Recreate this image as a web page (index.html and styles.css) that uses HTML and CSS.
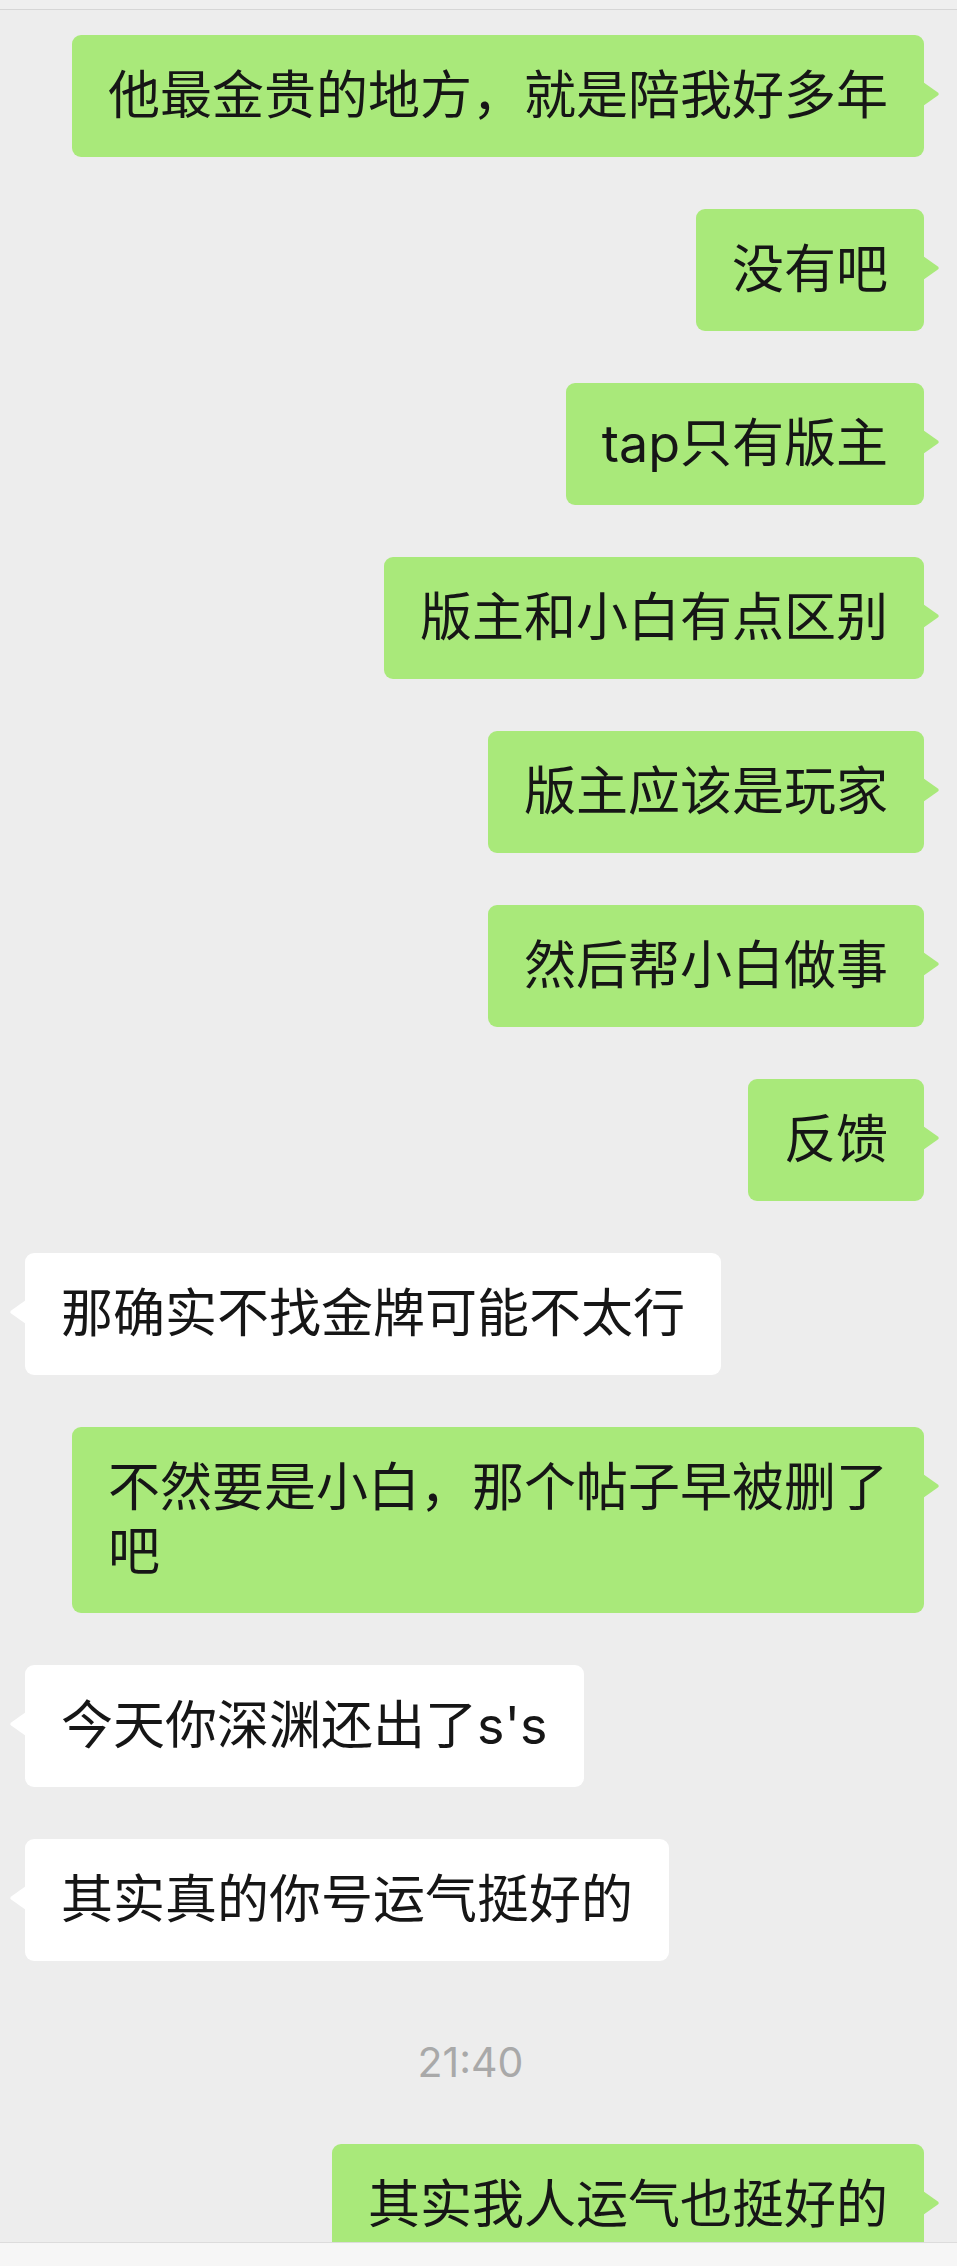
FILE: index.html
```html
<!DOCTYPE html>
<html lang="zh-CN">
<head>
  <meta charset="UTF-8">
  <meta name="viewport" content="width=device-width, initial-scale=1.0">
  <title>聊天记录</title>
  <link rel="stylesheet" href="styles.css">
</head>
<body>
  <div class="screen">
    <!-- 顶部导航栏的底边 -->
    <div class="topbar"></div>

    <!-- 消息列表 -->
    <div class="chat">
      <div class="msg mine"><div class="bubble">他最金贵的地方，就是陪我好多年</div></div>
      <div class="msg mine"><div class="bubble">没有吧</div></div>
      <div class="msg mine"><div class="bubble">tap只有版主</div></div>
      <div class="msg mine"><div class="bubble">版主和小白有点区别</div></div>
      <div class="msg mine"><div class="bubble">版主应该是玩家</div></div>
      <div class="msg mine"><div class="bubble">然后帮小白做事</div></div>
      <div class="msg mine"><div class="bubble">反馈</div></div>
      <div class="msg theirs"><div class="bubble">那确实不找金牌可能不太行</div></div>
      <div class="msg mine"><div class="bubble">不然要是小白，那个帖子早被删了吧</div></div>
      <div class="msg theirs"><div class="bubble">今天你深渊还出了s's</div></div>
      <div class="msg theirs"><div class="bubble">其实真的你号运气挺好的</div></div>

      <div class="time">21:40</div>

      <div class="msg mine"><div class="bubble">其实我人运气也挺好的</div></div>
    </div>

    <!-- 底部输入栏 -->
    <div class="inputbar"></div>
  </div>
</body>
</html>
```

FILE: styles.css
```css
body {
  margin: 0;
  padding: 0;
  background: #ededed;
  font-family: "Inter", "Noto Sans CJK SC", sans-serif;
}
.screen {
  width: 957px;
  height: 2266px;
  display: flex;
  flex-direction: column;
  overflow: hidden;
  background: #ededed;
}
.topbar {
  height: 9px;
  flex-shrink: 0;
  background: #efefef;
  border-bottom: 1px solid #d6d6d6;
}
.chat {
  flex: 1;
  overflow: hidden;
  display: flex;
  flex-direction: column;
  gap: 52px;
  padding: 25px 33px 0 25px;
}
.msg {
  display: flex;
}
.msg.mine {
  justify-content: flex-end;
}
.msg.theirs {
  justify-content: flex-start;
}
.bubble {
  position: relative;
  box-sizing: border-box;
  max-width: 852px;
  padding: 29px 36px;
  border-radius: 9px;
  font-size: 52px;
  line-height: 64px;
  color: #161616;
}
.mine .bubble {
  background: #a9e97a;
}
.theirs .bubble {
  background: #ffffff;
}
.bubble::after {
  content: "";
  position: absolute;
  top: 47px;
  width: 17px;
  height: 24px;
}
.mine .bubble::after {
  right: -16px;
  background: #a9e97a;
  clip-path: path("M0 0 L14.5 10.2 Q17 12 14.5 13.8 L0 24 Z");
}
.theirs .bubble::after {
  left: -16px;
  background: #ffffff;
  clip-path: path("M17 0 L2.5 10.2 Q0 12 2.5 13.8 L17 24 Z");
}
.time {
  margin: 24px 0 5px;
  height: 50px;
  line-height: 50px;
  text-align: center;
  font-size: 41px;
  color: #a9a9a9;
  padding-right: 8px;
}
.inputbar {
  height: 23px;
  flex-shrink: 0;
  background: #f6f6f6;
  border-top: 1px solid #dcdcdc;
}
```
